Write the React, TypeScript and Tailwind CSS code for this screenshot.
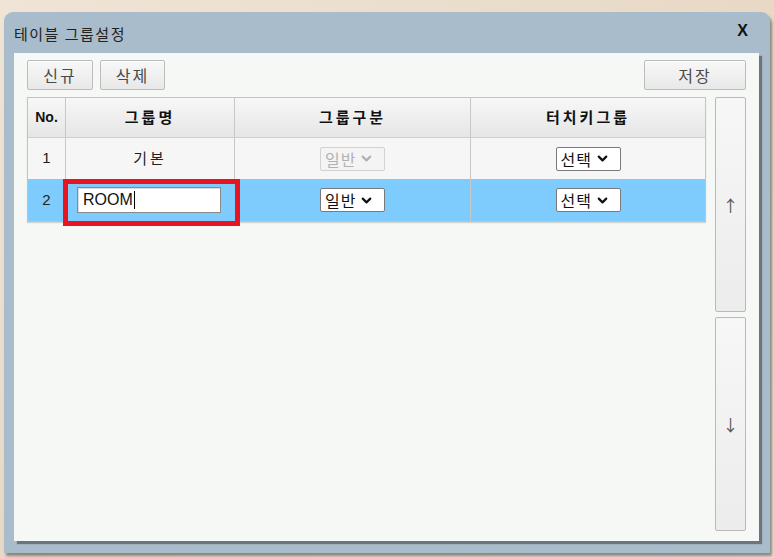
import { ChevronDown } from "lucide-react";

const font = { fontFamily: '"Noto Sans CJK KR", "Liberation Sans", sans-serif' };

function Btn({ label, w }: { label: string; w: string }) {
  return (
    <button
      className={`${w} h-[30px] rounded-[2px] border border-[#bcbcbc] bg-gradient-to-b from-[#f8f8f8] to-[#e8e8e8] text-[16px] tracking-[2px] text-[#4a4a4a] shadow-[inset_0_1px_0_#fff]`}
    >
      {label}
    </button>
  );
}

function Select({ label, disabled }: { label: string; disabled?: boolean }) {
  return (
    <div
      className={`flex h-[24px] w-[65px] items-center gap-[3px] rounded-[2px] border pl-[4px] text-[16px] leading-none tracking-[1px] ${
        disabled
          ? "border-[#d2d2d2] bg-[#f4f4f4] text-[#b2b2b2]"
          : "border-[#7a7a7a] bg-white text-[#111]"
      }`}
    >
      <span>{label}</span>
      <ChevronDown
        size={15}
        strokeWidth={3.5}
        color={disabled ? "#b2b2b2" : "#111"}
      />
    </div>
  );
}

export default function App() {
  return (
    <div
      className="h-[558px] w-[774px] overflow-hidden bg-gradient-to-br from-[#efe4d6] via-[#e8d9c6] to-[#ede1d2] pt-[12px] pl-[4px]"
      style={font}
    >
      <div className="flex h-[541px] w-[766px] flex-col rounded-t-[9px] bg-[#a9bccc] px-[10px] pb-[12px] pr-[11px] shadow-[2px_3px_3px_rgba(60,60,60,0.55)]">
        <div className="flex h-[41px] items-center justify-between pt-[4px] pr-[11px]">
          <span className="text-[15px] text-[#222] tracking-[1.5px]">테이블 그룹설정</span>
          <span className="mb-[8px] text-[16px] font-bold text-[#111]" style={{ fontFamily: '"Liberation Sans", sans-serif' }}>
            X
          </span>
        </div>
        <div className="flex flex-1 flex-col bg-[#f6f8f6] pt-[7px] pl-[13px] pr-[13px] pb-[10px] shadow-[3px_3px_1px_rgba(70,70,70,0.6)]">
          <div className="flex h-[30px] items-center justify-between">
            <div className="flex gap-[7px]">
              <Btn label="신규" w="w-[66px]" />
              <Btn label="삭제" w="w-[65px]" />
            </div>
            <Btn label="저장" w="w-[102px]" />
          </div>
          <div className="mt-[7px] flex flex-1 gap-[9px]">
            <div className="h-[125px] w-[679px] border border-[#c4c4c4] shadow-[0_1px_1px_rgba(0,0,0,0.15)]">
              <div className="grid h-[40px] grid-cols-[38px_169px_236px_1fr] border-b border-[#cfcfcf] bg-gradient-to-b from-[#f7f7f7] to-[#e6e6e6] text-[15px] font-bold text-[#111]">
                <div className="flex items-center justify-center border-r border-[#c8c8c8] text-[14px]" style={{ fontFamily: '"Liberation Sans", sans-serif' }}>No.</div>
                <div className="flex items-center justify-center border-r border-[#c8c8c8] tracking-[3px]">그룹명</div>
                <div className="flex items-center justify-center border-r border-[#c8c8c8] tracking-[3px]">그룹구분</div>
                <div className="flex items-center justify-center tracking-[3px]">터치키그룹</div>
              </div>
              <div className="grid h-[41px] grid-cols-[38px_169px_236px_1fr] bg-[#f5f6f5] text-[15px] text-[#222]">
                <div className="flex items-center justify-center border-r border-[#c8c8c8]" style={{ fontFamily: '"Liberation Sans", sans-serif' }}>1</div>
                <div className="flex items-center justify-center border-r border-[#c8c8c8] tracking-[3px]">기본</div>
                <div className="flex items-center justify-center border-r border-[#c8c8c8]">
                  <Select label="일반" disabled />
                </div>
                <div className="flex items-center justify-center">
                  <Select label="선택" />
                </div>
              </div>
              <div className="grid h-[42px] grid-cols-[38px_169px_236px_1fr] bg-[#7ecbfe] text-[15px] text-[#222]">
                <div className="flex items-center justify-center border-r border-[#c8c8c8]" style={{ fontFamily: '"Liberation Sans", sans-serif' }}>2</div>
                <div className="relative flex items-center pl-[11px]">
                  <div className="flex h-[26px] w-[144px] items-center border border-[#8a8a8a] bg-white px-[5px] text-[16px] text-[#111] shadow-[inset_1px_1px_1px_rgba(0,0,0,0.15)]" style={{ fontFamily: '"Liberation Sans", sans-serif' }}>
                    ROOM
                    <span className="ml-[1px] h-[18px] w-[1.5px] bg-black" />
                  </div>
                  <div className="absolute -left-[3px] top-0 h-[47px] w-[177px] border-[5px] border-[#e8141f]" />
                </div>
                <div className="flex items-center justify-center border-r border-[#c8c8c8]">
                  <Select label="일반" />
                </div>
                <div className="flex items-center justify-center">
                  <Select label="선택" />
                </div>
              </div>
            </div>
            <div className="flex w-[31px] flex-col gap-[5px]">
              <button className="flex h-[215px] items-center justify-center rounded-[2px] border border-[#b9b9b9] bg-gradient-to-b from-[#f7f7f7] to-[#ececec] text-[16px] text-[#555]">
                ↑
              </button>
              <button className="flex h-[214px] items-center justify-center rounded-[2px] border border-[#b9b9b9] bg-gradient-to-b from-[#f7f7f7] to-[#ececec] text-[16px] text-[#555]">
                ↓
              </button>
            </div>
          </div>
        </div>
      </div>
    </div>
  );
}
